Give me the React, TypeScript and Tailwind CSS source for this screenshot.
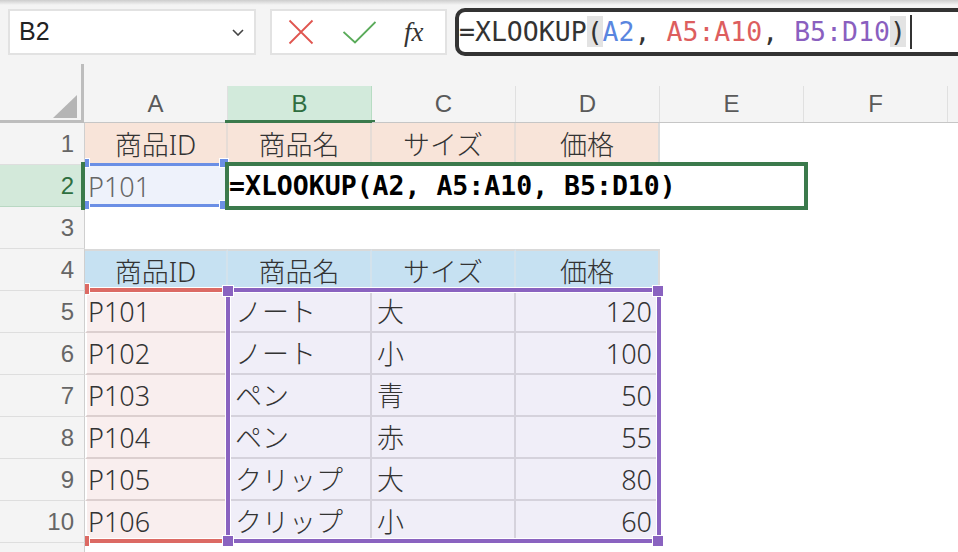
import React from "react";

// Excel 風: XLOOKUP の数式を B2 に入力中の画面
const ui = "font-['Liberation_Sans',Arial,sans-serif]";
const jp = "font-['Noto_Sans','Noto_Sans_CJK_JP',sans-serif] font-light";
const mono = "font-['DejaVu_Sans_Mono',monospace]";

const heads = ["商品ID", "商品名", "サイズ", "価格"];
const data = [
  ["P101", "ノート", "大", "120"],
  ["P102", "ノート", "小", "100"],
  ["P103", "ペン", "青", "50"],
  ["P104", "ペン", "赤", "55"],
  ["P105", "クリップ", "大", "80"],
  ["P106", "クリップ", "小", "60"],
];
const cols = ["A", "B", "C", "D", "E", "F"];

function RowHead({ n, active }: { n?: number; active?: boolean }) {
  return (
    <div
      className={`relative z-10 flex h-[42px] w-[85px] shrink-0 items-center justify-end border-r border-b border-r-[#cfcfcf] pr-[10px] text-[24px] ${ui} ${
        active ? "border-b-[#b9d8c3] bg-[#d3e9da] text-[#2f6f3f]" : "border-b-[#dedede] bg-[#f4f4f4] text-[#666]"
      }`}
    >
      {n}
    </div>
  );
}

function Row({ n, active, children }: { n?: number; active?: boolean; children?: React.ReactNode }) {
  return (
    <div className="flex h-[42px]">
      <RowHead n={n} active={active} />
      {children}
      <div className="flex-1 bg-white" />
    </div>
  );
}

function Header() {
  return (
    <div className="flex h-[59px]">
      <div className="flex h-[59px] w-[84px] shrink-0 items-end justify-end border-r-[3px] border-b-[3px] border-[#bdbdbd] pr-[4px] pb-[2px]">
        <svg width="24" height="23" viewBox="0 0 24 23">
          <polygon points="0,23 24,23 24,0" fill="#b5b5b5" />
        </svg>
      </div>
      {cols.map((c) => (
        <div key={c} className="relative flex h-[59px] w-[144px] shrink-0 flex-col justify-end border-b border-[#c6c6c6]">
          <div
            className={`flex h-[36px] items-center justify-center border-r text-[24px] ${ui} ${
              c === "B" ? "border-[#b7dcc3] bg-[#d2eadb] text-[#2f6e3f]" : "border-[#e0e0e0] text-[#5a5a5a]"
            }`}
          >
            {c}
          </div>
          {c === "B" && <div className="absolute -left-[3px] -right-[3px] bottom-[-1px] h-[3px] bg-[#3b7a4c]" />}
        </div>
      ))}
      <div className="flex-1 border-b border-[#c6c6c6]" />
    </div>
  );
}

function Toolbar() {
  return (
    <div className="flex h-[64px] items-start pt-[8px]">
      <div className="mt-[1px] ml-[8px] flex h-[46px] w-[248px] shrink-0 items-center justify-between border-2 border-[#e2e2e2] bg-white pr-[10px] pl-[9px]">
        <span className={`text-[25px] text-[#222] ${ui}`}>B2</span>
        <svg width="12" height="7" viewBox="0 0 12 7">
          <polyline points="1,1 6,6 11,1" fill="none" stroke="#444" strokeWidth="1.6" />
        </svg>
      </div>
      <div className="mt-[1px] ml-[14px] flex h-[46px] w-[177px] shrink-0 items-center border-2 border-[#e2e2e2] bg-white pl-[16px]">
        <svg width="26" height="26" viewBox="0 0 26 26">
          <path d="M1.5 1.5 L24.5 24.5 M24.5 1.5 L1.5 24.5" stroke="#e0554f" strokeWidth="1.8" fill="none" />
        </svg>
        <svg className="ml-[29px]" width="33" height="23" viewBox="0 0 33 23">
          <polyline points="0.5,11 12,21.5 32.5,1" fill="none" stroke="#5aab5a" strokeWidth="1.9" />
        </svg>
        <span className="ml-[28px] font-['Liberation_Serif',serif] text-[27px] text-[#333] italic">fx</span>
      </div>
      <div className="ml-[8px] flex h-[48px] w-[560px] shrink-0 items-center rounded-[10px] border-4 border-[#333] bg-white">
        <span className={`${mono} text-[26.5px] whitespace-pre text-[#333]`}>
          =XLOOKUP<span className="bg-[#e3e3e3]">(</span>
          <span className="text-[#5a86df]">A2</span>,{" "}
          <span className="text-[#dd5e5e]">A5:A10</span>,{" "}
          <span className="text-[#8a5fbf]">B5:D10</span>
          <span className="bg-[#e3e3e3]">)</span>
        </span>
        <span className="ml-[4px] h-[34px] w-[2px] bg-[#333]" />
      </div>
    </div>
  );
}

export default function App() {
  const peach = "flex items-center justify-center pt-[3px] bg-[#f8e4d9] border-r-2 border-[#e6dcd6]";
  const blue = "flex items-center justify-center pt-[2px] bg-[#c6e1f2] border-t-2 border-r-2 border-t-[#d9d9d9] border-r-[#d3e2ec]";
  const lav = "flex items-center pt-[3px] bg-[#f0eef8] border-b-2 border-r-2 border-[#d5d2dc]";

  return (
    <div className={`relative h-[552px] w-[958px] overflow-hidden bg-[#f4f4f4] text-[#333] ${ui}`}>
      <div className="absolute inset-x-0 top-0 h-[5px] bg-linear-to-b from-[#cdcdcd] to-[#f4f4f4]" />
      <Toolbar />
      <Header />

      <div className={`relative text-[27px] text-[#333] ${jp}`}>
        <Row n={1}>
          {heads.map((h, i) => (
            <div key={h} className={`h-[42px] ${i === 0 ? "w-[143px]" : "w-[144px]"} ${peach} ${i === 3 ? "border-r-[#dcdcdc]" : ""}`}>
              {h}
            </div>
          ))}
        </Row>
        <Row n={2} active>
          <div className="flex h-[42px] w-[143px] items-center bg-[#eef2fb] pt-[3px] pl-[3px] text-[#666]">P101</div>
        </Row>
        <Row n={3} />
        <Row n={4}>
          {heads.map((h, i) => (
            <div key={h} className={`h-[42px] ${i === 0 ? "w-[143px]" : "w-[144px]"} ${blue} ${i === 3 ? "border-r-[#dcdcdc]" : ""}`}>
              {h}
            </div>
          ))}
        </Row>
        {data.map((r, i) => (
          <Row key={r[0]} n={i + 5}>
            <div className="flex h-[42px] w-[143px] items-center border-b-2 border-l-2 border-r-[3px] border-b-[#dccfcf] border-l-white border-r-white bg-[#f9eeee] pt-[3px] pl-[1px]">
              {r[0]}
            </div>
            <div className={`h-[42px] w-[144px] pl-[7px] ${lav}`}>{r[1]}</div>
            <div className={`h-[42px] w-[144px] pl-[5px] ${lav}`}>{r[2]}</div>
            <div className={`h-[42px] w-[144px] justify-end pr-[6px] ${lav}`}>{r[3]}</div>
          </Row>
        ))}
        <Row />

        {/* 参照範囲とハンドル */}
        <div className="absolute top-[40px] left-[86px] h-[3px] w-[138px] bg-[#6b8fe5]" />
        <div className="absolute top-[81px] left-[86px] h-[3px] w-[138px] bg-[#6b8fe5]" />
        {[
          "top-[35px] left-[80px]",
          "top-[35px] left-[219px]",
          "top-[77px] left-[80px]",
          "top-[77px] left-[219px]",
        ].map((p) => (
          <div key={p} className={`absolute h-[10px] w-[10px] border border-white bg-[#6b8fe5] ${p}`} />
        ))}

        <div className="absolute top-[39px] left-[225px] flex h-[48px] w-[583px] items-center border-4 border-[#3b7a4c] bg-white">
          <span className={`${mono} text-[26.5px] font-bold whitespace-pre text-black`}>=XLOOKUP(A2, A5:A10, B5:D10)</span>
        </div>
        <div className="absolute top-[39px] left-[81px] z-20 h-[48px] w-[4px] bg-[#3b7a4c]" />

        <div className="absolute top-[165px] left-[86px] h-[4px] w-[140px] bg-[#dc6a64] shadow-[0_0_0_1px_#fff]" />
        <div className="absolute top-[416px] left-[86px] h-[4px] w-[140px] bg-[#dc6a64] shadow-[0_0_0_1px_#fff]" />
        <div className="absolute top-[160px] left-[78px] h-[12px] w-[12px] border border-white bg-[#dc6a64]" />
        <div className="absolute top-[412px] left-[78px] h-[12px] w-[12px] border border-white bg-[#dc6a64]" />

        <div className="absolute top-[165px] left-[226px] h-[255px] w-[435px] border-4 border-[#8a63c0] shadow-[0_0_0_1px_#fff,inset_0_0_0_1px_#fff]" />
        {[
          "top-[162px] left-[222px]",
          "top-[162px] left-[652px]",
          "top-[412px] left-[222px]",
          "top-[412px] left-[652px]",
        ].map((p) => (
          <div key={p} className={`absolute h-[12px] w-[12px] border border-white bg-[#8a63c0] ${p}`} />
        ))}
      </div>
    </div>
  );
}
